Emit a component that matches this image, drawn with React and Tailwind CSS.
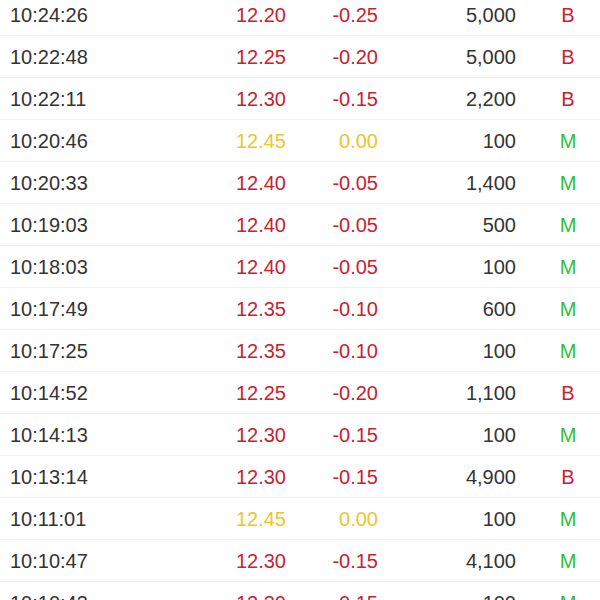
import React from "react";

const rows = [
  ["10:24:26", "12.20", "-0.25", "5,000", "B"],
  ["10:22:48", "12.25", "-0.20", "5,000", "B"],
  ["10:22:11", "12.30", "-0.15", "2,200", "B"],
  ["10:20:46", "12.45", "0.00", "100", "M"],
  ["10:20:33", "12.40", "-0.05", "1,400", "M"],
  ["10:19:03", "12.40", "-0.05", "500", "M"],
  ["10:18:03", "12.40", "-0.05", "100", "M"],
  ["10:17:49", "12.35", "-0.10", "600", "M"],
  ["10:17:25", "12.35", "-0.10", "100", "M"],
  ["10:14:52", "12.25", "-0.20", "1,100", "B"],
  ["10:14:13", "12.30", "-0.15", "100", "M"],
  ["10:13:14", "12.30", "-0.15", "4,900", "B"],
  ["10:11:01", "12.45", "0.00", "100", "M"],
  ["10:10:47", "12.30", "-0.15", "4,100", "M"],
  ["10:10:43", "12.30", "-0.15", "100", "M"],
];

export default function App() {
  return (
    <div
      className="w-[600px] h-[600px] overflow-hidden bg-white text-[20px] leading-none"
      style={{ fontFamily: '"Liberation Sans", Arial, sans-serif' }}
    >
      <div className="-mt-[6px]">
        {rows.map(([t, p, c, v, k], i) => {
          const flat = c === "0.00";
          const col = flat ? "text-[#eec52a]" : "text-[#c92130]";
          return (
            <div
              key={i}
              className="flex items-center h-[42px] border-b border-[#f0f0f0] box-border"
            >
              <div className="w-[200px] pl-[10px] text-[#333333]">{t}</div>
              <div className={`w-[86px] text-right ${col}`}>{p}</div>
              <div className={`w-[92px] text-right ${col}`}>{c}</div>
              <div className="w-[138px] text-right text-[#333333]">{v}</div>
              <div
                className={`ml-[24px] w-[56px] text-center ${
                  k === "B" ? "text-[#c92130]" : "text-[#2fbf3b]"
                }`}
              >
                {k}
              </div>
            </div>
          );
        })}
      </div>
    </div>
  );
}
